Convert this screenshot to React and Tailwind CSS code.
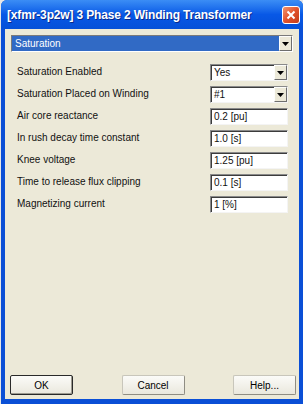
import React from 'react';

const rows = [
  { label: 'Saturation Enabled', value: 'Yes', combo: true },
  { label: 'Saturation Placed on Winding', value: '#1', combo: true },
  { label: 'Air core reactance', value: '0.2 [pu]' },
  { label: 'In rush decay time constant', value: '1.0 [s]' },
  { label: 'Knee voltage', value: '1.25 [pu]' },
  { label: 'Time to release flux clipping', value: '0.1 [s]' },
  { label: 'Magnetizing current', value: '1 [%]' },
];

const ArrowButton = () => (
  <div className="flex items-center justify-center w-[13px] h-full bg-[#ece9d8] border-t border-l border-[#fdfdfb] border-r border-b border-r-[#6e6e6e] border-b-[#6e6e6e]">
    <svg width="7" height="4" viewBox="0 0 7 4">
      <path d="M0 0 H7 L3.5 4 Z" fill="#000" />
    </svg>
  </div>
);

const Button = ({ label, isDefault }) => (
  <button
    className={
      'w-[63px] h-[20px] text-[10px] text-black bg-gradient-to-b from-[#fbfbf8] to-[#eae8dd] rounded-[2px] ' +
      (isDefault
        ? 'border border-[#2a2a2a] shadow-[inset_-1px_-1px_0_#9d9b90]'
        : 'border border-[#c8c6bb] border-r-[#8f8d83] border-b-[#8f8d83]')
    }
  >
    {label}
  </button>
);

const App = () => {
  return (
    <div
      className="w-[303px] h-[404px] bg-[#e6e6e6] pl-[1px]"
      style={{ fontFamily: '"Liberation Sans", Arial, sans-serif' }}
    >
      <div className="flex flex-col h-full rounded-t-[6px] bg-[#0a4fd6] overflow-hidden">
        {/* Title bar */}
        <div className="flex items-center justify-between h-[29px] pl-[6px] pr-[3px] bg-gradient-to-b from-[#3b8df5] via-[#0858e6] to-[#0550d8]">
          <span className="text-white font-bold text-[12px] tracking-[-0.15px] [text-shadow:1px_1px_0_#0b2a8a]">
            [xfmr-3p2w] 3 Phase 2 Winding Transformer
          </span>
          <div className="flex items-center justify-center w-[18px] h-[18px] rounded-[3px] border border-white bg-gradient-to-br from-[#f0936c] via-[#e0512c] to-[#c43b18]">
            <svg width="10" height="10" viewBox="0 0 10 10">
              <path d="M1.5 1.5 L8.5 8.5 M8.5 1.5 L1.5 8.5" stroke="#fff" strokeWidth="2" />
            </svg>
          </div>
        </div>

        {/* Body */}
        <div className="flex flex-col flex-1 mx-[4px] mb-[5px] bg-[#ece9d8]">
          {/* Page selector */}
          <div className="flex h-[17px] mt-[6px] mx-[6px] bg-[#316ac5] border-t border-l border-[#7a7a7a] border-r border-b border-r-white border-b-white">
            <span className="flex-1 pl-[3px] text-[10px] leading-[15px] text-white">Saturation</span>
            <ArrowButton />
          </div>

          {/* Fields */}
          <div className="flex flex-col gap-[5px] mt-[12px] pl-[12px] pr-[11px]">
            {rows.map((row) => (
              <div key={row.label} className="flex items-center justify-between h-[17px]">
                <span className="text-[10px] text-[#111] -mt-[2px]">{row.label}</span>
                <div className="flex w-[78px] h-[17px] bg-white border-t border-l border-[#8a8a8a] border-r border-b border-r-[#f4f4f4] border-b-[#f4f4f4] shadow-[inset_1px_1px_0_#3c3c3c]">
                  <span className="flex-1 pl-[3px] text-[10px] leading-[16px] text-[#111]">{row.value}</span>
                  {row.combo && <ArrowButton />}
                </div>
              </div>
            ))}
          </div>

          {/* Buttons */}
          <div className="flex justify-between mt-auto mb-[4px] pl-[5px] pr-[3px]">
            <Button label="OK" isDefault />
            <Button label="Cancel" />
            <Button label="Help..." />
          </div>
        </div>
      </div>
    </div>
  );
};

export default App;
